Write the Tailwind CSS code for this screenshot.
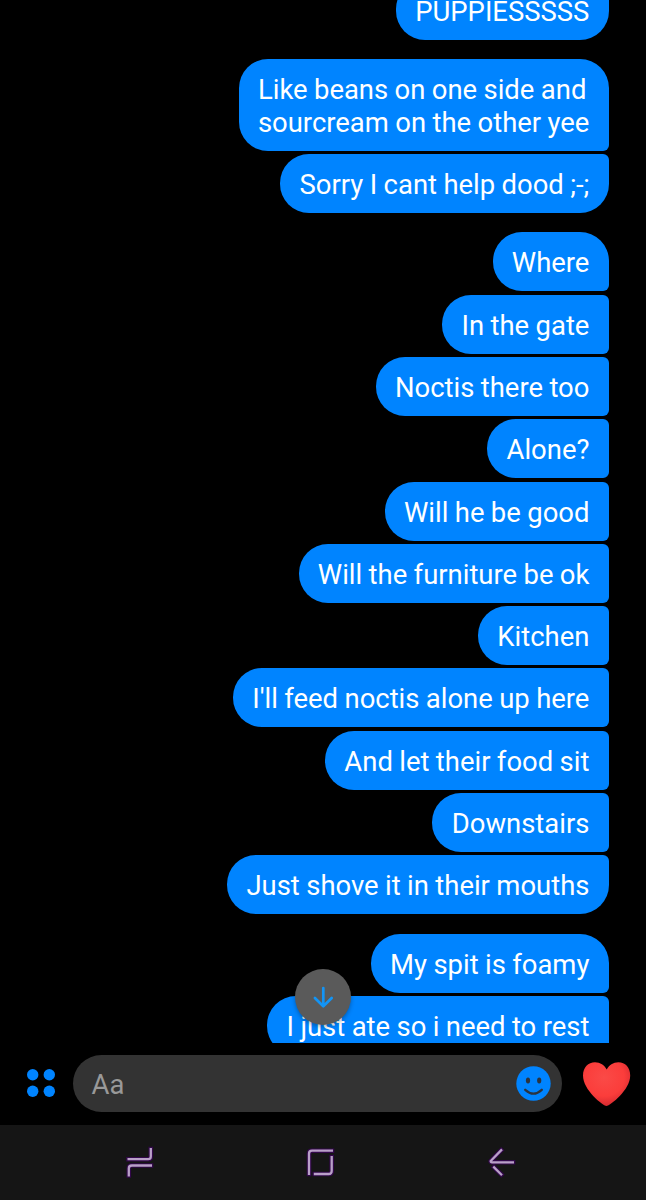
<!DOCTYPE html>
<html lang="en">
<head>
<meta charset="utf-8">
<title>Chat</title>
<script src="https://cdn.jsdelivr.net/npm/@tailwindcss/browser@4"></script>
</head>
<body class="bg-black">
<div class="relative flex h-[1200px] w-[646px] flex-col overflow-hidden bg-black font-[Roboto,sans-serif]">
  <main class="h-[1042.5px] shrink-0 overflow-hidden pr-[37.3px] text-[27.45px] leading-[32.6px] [word-spacing:-0.4px] whitespace-nowrap text-white">
    <div class="-mt-[19.7px] flex flex-col items-end gap-[19.6px] *:flex *:flex-col *:items-end *:gap-[3.3px]">
      <section class="-mb-[0.6px]">
        <p class="h-[59.6px] rounded-[29px] rounded-tr-md bg-[#0084ff] px-[19.3px] pt-[16px]">PUPPIESSSSS</p>
      </section>
      <section>
        <p class="h-[91.6px] rounded-[29px] rounded-br-md bg-[#0084ff] px-[19.3px] pt-[15px]">Like beans on one side and<br>sourcream on the other yee</p>
        <p class="h-[59px] rounded-[29px] rounded-tr-md bg-[#0084ff] px-[19.3px] pt-[15px]">Sorry I cant help dood ;-;</p>
      </section>
      <section>
        <p class="h-[59px] rounded-[29px] rounded-br-md bg-[#0084ff] px-[19.3px] pt-[15px]">Where</p>
        <p class="h-[59px] rounded-l-[29px] rounded-r-md bg-[#0084ff] px-[19.3px] pt-[15px]">In the gate</p>
        <p class="h-[59px] rounded-l-[29px] rounded-r-md bg-[#0084ff] px-[19.3px] pt-[15px]">Noctis there too</p>
        <p class="h-[59px] rounded-l-[29px] rounded-r-md bg-[#0084ff] px-[19.3px] pt-[15px]">Alone?</p>
        <p class="h-[59px] rounded-l-[29px] rounded-r-md bg-[#0084ff] px-[19.3px] pt-[15px]">Will he be good</p>
        <p class="h-[59px] rounded-l-[29px] rounded-r-md bg-[#0084ff] px-[19.3px] pt-[15px]">Will the furniture be ok</p>
        <p class="h-[59px] rounded-l-[29px] rounded-r-md bg-[#0084ff] px-[19.3px] pt-[15px]">Kitchen</p>
        <p class="h-[59px] rounded-l-[29px] rounded-r-md bg-[#0084ff] px-[19.3px] pt-[15px]">I'll feed noctis alone up here</p>
        <p class="h-[59px] rounded-l-[29px] rounded-r-md bg-[#0084ff] px-[19.3px] pt-[15px]">And let their food sit</p>
        <p class="h-[59px] rounded-l-[29px] rounded-r-md bg-[#0084ff] px-[19.3px] pt-[15px]">Downstairs</p>
        <p class="h-[59px] rounded-[29px] rounded-tr-md bg-[#0084ff] px-[19.3px] pt-[15px]">Just shove it in their mouths</p>
      </section>
      <section>
        <p class="h-[59px] rounded-[29px] rounded-br-md bg-[#0084ff] px-[19.3px] pt-[14.6px]">My spit is foamy</p>
        <p class="h-[59px] rounded-l-[29px] rounded-r-md bg-[#0084ff] px-[19.3px] pt-[14.6px]">I just ate so i need to rest</p>
      </section>
    </div>
  </main>

  <button class="absolute top-[969px] left-[295px] flex size-14 items-center justify-center rounded-full bg-[#5a5a5a] shadow-[0_2px_4px_rgba(0,0,0,0.3)]" aria-label="Scroll down">
    <svg class="size-6" viewBox="0 0 24 24" fill="none" stroke="#1394f5" stroke-width="2.7" stroke-linecap="round" stroke-linejoin="round"><path d="M12.3 3V21M3.9 13l8.4 8.3 8.4-8.3"/></svg>
  </button>

  <div class="flex h-[82px] shrink-0 items-center pb-px">
    <svg class="ml-[26px] h-[30px] w-[30px]" viewBox="0 0 30 30" fill="#0084ff"><circle cx="6.7" cy="6.7" r="5.7"/><circle cx="23.3" cy="6.7" r="5.7"/><circle cx="6.7" cy="23.3" r="5.7"/><circle cx="23.3" cy="23.3" r="5.7"/></svg>
    <div class="ml-[16.5px] flex h-[57px] w-[489px] items-center justify-between rounded-full bg-[#333] pr-[11px] pl-[19px]">
      <span class="pt-[3px] text-[27.5px] leading-8 text-[#999]">Aa</span>
      <svg class="size-[35px]" viewBox="0 0 35 35"><circle cx="17.5" cy="17.5" r="17.2" fill="#0084ff"/><ellipse cx="12" cy="14.5" rx="2.1" ry="2.9" fill="#2b3440"/><ellipse cx="23.2" cy="14.5" rx="2.1" ry="2.9" fill="#2b3440"/><path d="M9.2 23.8q8.3 7.6 16.6 0" fill="none" stroke="#2b3440" stroke-width="2.3" stroke-linecap="round"/></svg>
    </div>
    <svg class="mt-px ml-5 h-[46px] w-[50px]" viewBox="0 0 50 46">
      <defs>
        <radialGradient id="heart" cx=".45" cy=".35" r=".65"><stop offset="0" stop-color="#fa4a47"/><stop offset=".65" stop-color="#fb3d3b"/><stop offset="1" stop-color="#d62a30"/></radialGradient>
      </defs>
      <path d="M24.5 45.1C20.5 44.1 1 29 1 14.4 1 6.4 6.2 1.3 13 1.3c5.2 0 9.5 3 11.7 7.3C27 4.3 31.2 1.3 36.4 1.3 43.2 1.3 48.2 6.4 48.2 14.4c0 14.6-19.7 29.7-23.7 30.7Z" fill="url(#heart)"/>
    </svg>
  </div>

  <nav class="flex grow items-center border-b border-[#08030b] bg-[#151515]">
    <svg class="h-[75px] w-[646px]" viewBox="0 1125 646 75" fill="none">
      <g stroke="#32084a" stroke-width="4.6" stroke-linecap="square">
        <path d="M150.8 1149V1156.5q0 2.7-2.7 2.7H128.5M151 1165.5H131.8q-3 0-3 3V1175.5"/>
        <path d="M332 1150.7H312q-3 0-3 3V1174M314.8 1174H328.7q3 0 3-3V1157"/>
        <path d="M501.2 1150.2L490.7 1161Q490.5 1162.3 492 1162.3H513M494 1167.3L501.3 1174.5"/>
      </g>
      <g stroke="#b9a0c8" stroke-width="2.3">
        <path d="M150.8 1148V1156.5q0 2.7-2.7 2.7H127.5M152 1165.5H131.8q-3 0-3 3V1176.5"/>
        <path d="M333 1150.7H312q-3 0-3 3V1175M313.8 1174H328.7q3 0 3-3V1156"/>
        <path d="M502 1149.4L490.7 1161Q490.5 1162.3 492 1162.3H514M493.3 1166.6L502 1175.2"/>
      </g>
    </svg>
  </nav>
</div>
</body>
</html>
